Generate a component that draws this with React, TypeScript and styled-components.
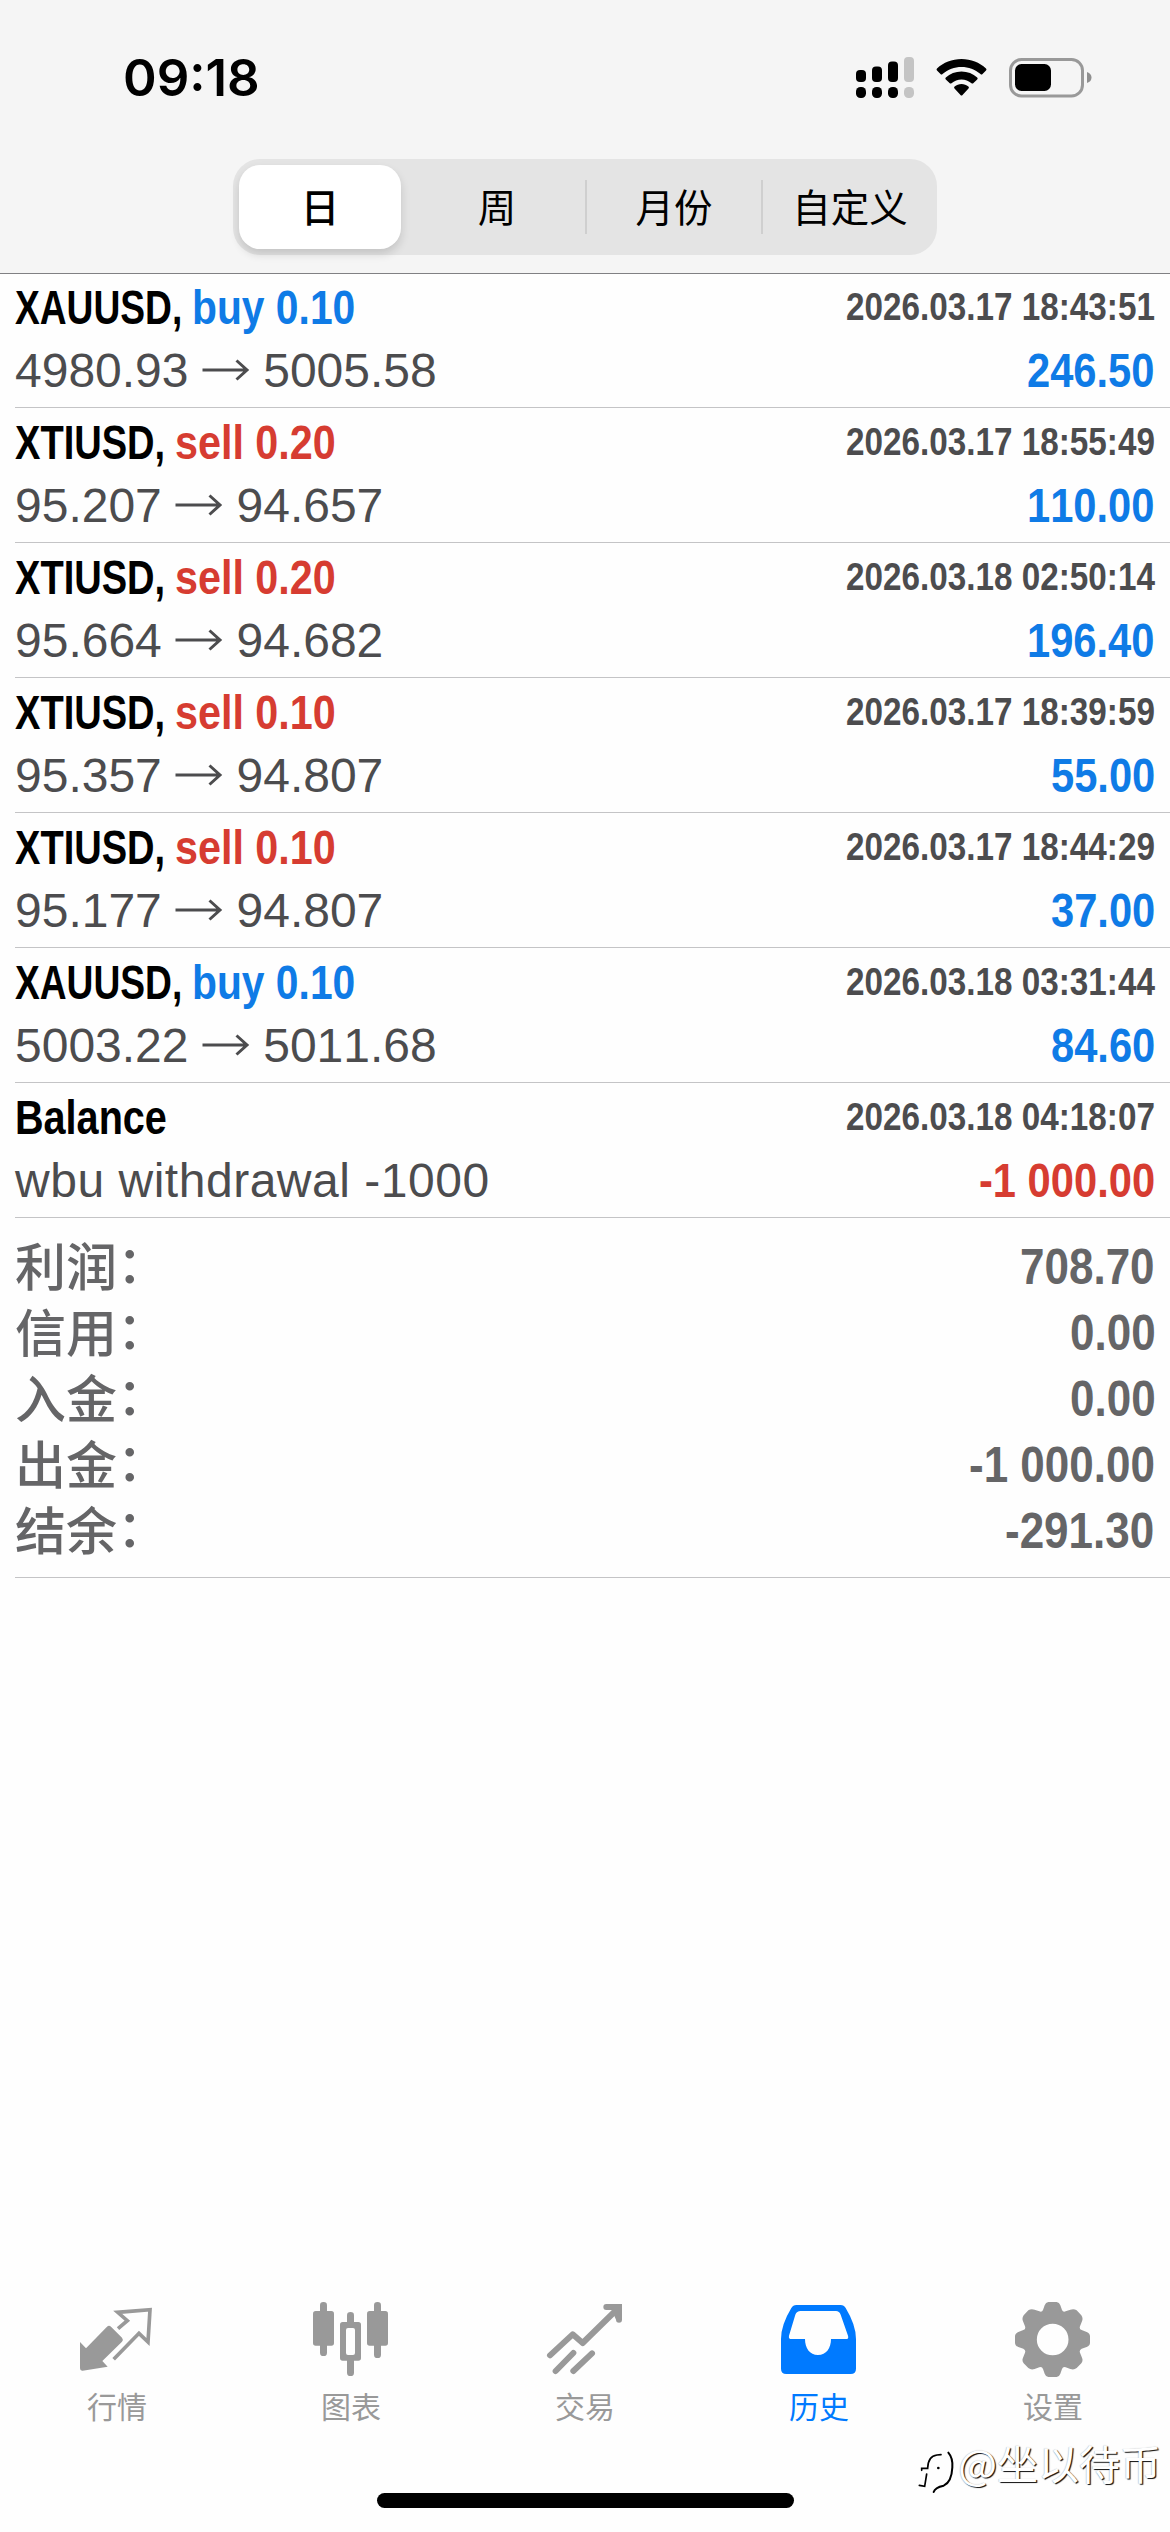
import React, { useLayoutEffect, useRef, useState } from 'react';
import styled, { createGlobalStyle } from 'styled-components';

const CJK = '"Noto Sans CJK SC", "Noto Sans", sans-serif';
const LATIN = '"Liberation Sans", Arial, "Noto Sans CJK SC", sans-serif';
const BLUE = '#0f7be6';
const RED = '#d63c31';

const GlobalStyle = createGlobalStyle`
  * { box-sizing: border-box; }
  body { margin: 0; background: #fefefe; }
`;

const Screen = styled.div`
  position: relative;
  display: flex;
  flex-direction: column;
  width: 1170px;
  height: 2532px;
  overflow: hidden;
  background: #fefefe;
  font-family: ${LATIN};
  font-kerning: none;
`;

const Header = styled.header`
  display: flex;
  flex-direction: column;
  align-items: center;
  height: 274px;
  flex: none;
  background: #f5f5f5;
  border-bottom: 1px solid #808083;
`;

const StatusBar = styled.div`
  display: flex;
  justify-content: space-between;
  align-items: center;
  width: 100%;
  height: 159px;
  padding: 0 78px 3px 123px;
`;

const Clock = styled.div`
  font: 600 51px/60px Inter, "Liberation Sans", sans-serif;
  color: #000;
`;

const StatusIcons = styled.svg`
  width: 236px;
  height: 44px;
`;

const Segments = styled.div`
  display: grid;
  grid-template-columns: repeat(4, 1fr);
  align-items: center;
  width: 704px;
  height: 96px;
  border-radius: 27px;
  background: #e4e4e4;
`;

const Segment = styled.button<{ $active?: boolean; $divided?: boolean }>`
  display: flex;
  align-items: center;
  justify-content: center;
  height: ${p => (p.$active ? '84px' : '54px')};
  margin: ${p => (p.$active ? '0 8px 0 6px' : '0')};
  padding: 0 0 4px;
  border: 0;
  border-left: ${p => (p.$divided ? '2px solid #cfcfcf' : '0')};
  border-radius: ${p => (p.$active ? '21px' : '0')};
  background: ${p => (p.$active ? '#fff' : 'transparent')};
  box-shadow: ${p => (p.$active ? '0 5px 10px rgba(0, 0, 0, 0.14)' : 'none')};
  font: ${p => (p.$active ? 500 : 400)} 38.5px/50px ${CJK};
  color: #000;
`;

const DealList = styled.main`
  display: flex;
  flex-direction: column;
  margin: -1px 0 0 15px;
`;

const Deal = styled.article`
  height: 135px;
  padding: 3px 15px 0 0;
  border-bottom: 1px solid #c4c4c6;
`;

const Line = styled.div`
  display: flex;
  justify-content: space-between;
  align-items: flex-start;
  height: 63px;
  white-space: pre;
`;

const Title = styled.div`
  display: flex;
  gap: 10px;
`;

const Heavy = styled.span<{ $color: string; $size?: number; $lh?: number }>`
  font-weight: 700;
  font-size: ${p => p.$size ?? 48}px;
  line-height: ${p => p.$lh ?? 63}px;
  color: ${p => p.$color};
`;

const Price = styled.div<{ $spacing?: number }>`
  font-size: 48px;
  line-height: 63px;
  letter-spacing: ${p => p.$spacing ?? 0}px;
  color: #4c4c4e;
`;

const Arrow = styled.svg`
  width: 48px;
  height: 24px;
  vertical-align: 5px;
`;

const Summary = styled.section`
  height: 360px;
  padding: 16px 15px 0 0;
  border-bottom: 1px solid #c4c4c6;
`;

const SummaryLine = styled.div`
  display: flex;
  justify-content: space-between;
  align-items: flex-start;
  height: 66px;
`;

const SummaryLabel = styled.span`
  font: 500 51px/69px ${LATIN};
  color: #656567;
`;

const Colon = styled.span`
  line-height: 0;
  vertical-align: 3px;
`;

const TabBar = styled.nav`
  display: grid;
  grid-template-columns: repeat(5, 1fr);
  margin-top: auto;
  height: 193px;
  flex: none;
`;

const Tab = styled.a<{ $active?: boolean }>`
  display: flex;
  flex-direction: column;
  align-items: center;
  gap: 7px;
  color: ${p => (p.$active ? '#007aff' : '#999')};
`;

const TabIcon = styled.svg`
  width: 78px;
  height: 78px;
`;

const TabLabel = styled.span`
  font: 400 30px/40px ${CJK};
`;

const HomeArea = styled.div`
  display: flex;
  justify-content: center;
  height: 39px;
  flex: none;
`;

const HomeIndicator = styled.div`
  width: 417px;
  height: 15px;
  border-radius: 8px;
  background: #000;
`;

const Watermark = styled.div`
  position: absolute;
  right: 9px;
  bottom: 38px;
  display: flex;
  align-items: center;
  gap: 2px;
  font: 400 41px/54px ${CJK};
  color: #fff;
  text-shadow: 1.3px 1.3px 0.8px #111, -0.5px -0.5px 1px rgba(0, 0, 0, 0.25);
  white-space: nowrap;
`;

const WatermarkLogo = styled.svg`
  width: 39px;
  height: 44px;
  margin-top: 20px;
`;

const CondensedBox = styled.span`
  display: block;
  white-space: pre;
`;

const CondensedInner = styled.span<{ $scale: number }>`
  display: block;
  width: max-content;
  transform: scaleX(${p => p.$scale});
  transform-origin: 0 50%;
`;

/* Narrows its text horizontally and takes up only the narrowed width. */
function Condensed({ scale, children }: { scale: number; children: React.ReactNode }) {
  const ref = useRef<HTMLSpanElement>(null);
  const [width, setWidth] = useState<number>();
  useLayoutEffect(() => {
    if (ref.current) setWidth(ref.current.offsetWidth * scale);
  }, [scale, children]);
  return (
    <CondensedBox style={{ width }}>
      <CondensedInner ref={ref} $scale={scale}>{children}</CondensedInner>
    </CondensedBox>
  );
}

type DealData = {
  symbol: string;
  side?: 'buy' | 'sell';
  volume?: string;
  from?: string;
  to?: string;
  comment?: string;
  time: string;
  profit: string;
};

const deals: DealData[] = [
  { symbol: 'XAUUSD', side: 'buy', volume: '0.10', from: '4980.93', to: '5005.58', time: '2026.03.17 18:43:51', profit: '246.50' },
  { symbol: 'XTIUSD', side: 'sell', volume: '0.20', from: '95.207', to: '94.657', time: '2026.03.17 18:55:49', profit: '110.00' },
  { symbol: 'XTIUSD', side: 'sell', volume: '0.20', from: '95.664', to: '94.682', time: '2026.03.18 02:50:14', profit: '196.40' },
  { symbol: 'XTIUSD', side: 'sell', volume: '0.10', from: '95.357', to: '94.807', time: '2026.03.17 18:39:59', profit: '55.00' },
  { symbol: 'XTIUSD', side: 'sell', volume: '0.10', from: '95.177', to: '94.807', time: '2026.03.17 18:44:29', profit: '37.00' },
  { symbol: 'XAUUSD', side: 'buy', volume: '0.10', from: '5003.22', to: '5011.68', time: '2026.03.18 03:31:44', profit: '84.60' },
  { symbol: 'Balance', comment: 'wbu withdrawal -1000', time: '2026.03.18 04:18:07', profit: '-1 000.00' },
];

const symbolScale: Record<string, number> = { XAUUSD: 0.774, XTIUSD: 0.793, Balance: 0.825 };

const totals = [
  ['利润', '708.70'],
  ['信用', '0.00'],
  ['入金', '0.00'],
  ['出金', '-1 000.00'],
  ['结余', '-291.30'],
];

function DealRow({ deal }: { deal: DealData }) {
  return (
    <Deal>
      <Line>
        <Title>
          <Heavy $color="#000">
            <Condensed scale={symbolScale[deal.symbol]}>{deal.symbol + (deal.side ? ',' : '')}</Condensed>
          </Heavy>
          {deal.side && (
            <Heavy $color={deal.side === 'buy' ? BLUE : RED}>
              <Condensed scale={deal.side === 'buy' ? 0.85 : 0.86}>{`${deal.side} ${deal.volume}`}</Condensed>
            </Heavy>
          )}
        </Title>
        <Heavy $color="#4c4c4e" $size={39} $lh={61}>
          <Condensed scale={0.853}>{deal.time}</Condensed>
        </Heavy>
      </Line>
      <Line>
        {deal.comment ? (
          <Price $spacing={0.52}>{deal.comment}</Price>
        ) : (
          <Price>
            {deal.from}{' '}
            <Arrow viewBox="0 0 48 24" fill="none" stroke="currentColor" strokeWidth="3">
              <path d="M0.5 12H45M34.5 2.500L45 12L34.5 21.500" />
            </Arrow>{' '}
            {deal.to}
          </Price>
        )}
        <Heavy $color={deal.profit.startsWith('-') ? RED : BLUE}>
          <Condensed scale={0.868}>{deal.profit}</Condensed>
        </Heavy>
      </Line>
    </Deal>
  );
}

function QuotesIcon() {
  return (
    <TabIcon viewBox="84 90 234 234">
      <path fill="currentColor" d="M90 216L108 235L171 170Q177 164 183 170L216 203Q221 209 216 215L157 273L173 290L98 302Q90 303 90 295Z" />
      <path fill="none" stroke="currentColor" strokeWidth="11" d="M204 176L232 152L203 127L300 119L294 216L267 190L191 268" />
    </TabIcon>
  );
}

function ChartsIcon() {
  return (
    <TabIcon viewBox="786 90 234 234">
      <g fill="currentColor">
        <rect x="810" y="96" width="21" height="162" rx="10" />
        <rect x="789" y="123" width="63" height="104" rx="8" />
        <rect x="972" y="96" width="21" height="168" rx="10" />
        <rect x="951" y="123" width="63" height="104" rx="8" />
        <path d="M891 160V136Q891 126 901.500 126T912 136V160Z" />
        <path d="M891 268V308Q891 318 901.500 318T912 308V268Z" />
        <path fillRule="evenodd" d="M878 156H925Q933 156 933 164V264Q933 272 925 272H878Q870 272 870 264V164Q870 156 878 156ZM894 174Q888 174 888 180V249Q888 255 894 255H909Q915 255 915 249V180Q915 174 909 174Z" />
      </g>
    </TabIcon>
  );
}

function TradeIcon() {
  return (
    <TabIcon viewBox="138 90 234 234">
      <g fill="none" stroke="currentColor" strokeWidth="18" strokeLinecap="round" strokeLinejoin="round">
        <path d="M150 256L218 193L248 219L352 117" />
        <path d="M319 111H350" />
        <path d="M357 120V149" />
        <path d="M167 303L220 249M220 303L276 250" />
      </g>
      <path fill="currentColor" d="M318 102H366V149H348L335 119Z" />
    </TabIcon>
  );
}

function HistoryIcon() {
  return (
    <TabIcon viewBox="840 90 234 234">
      <path
        fill="currentColor"
        fillRule="evenodd"
        d="M889 105H1022Q1032 105 1037 114Q1068 165 1068 207V296Q1068 312 1052 312H859Q843 312 843 296V207Q843 165 874 114Q879 105 889 105ZM902 123Q890 123 886 134L867 197Q865 207 874 207H915C915 234 929 255 954 255S993 234 993 207H1038Q1047 207 1044 197L1022 134Q1018 123 1008 123Z"
      />
    </TabIcon>
  );
}

function SettingsIcon() {
  return (
    <TabIcon viewBox="342 90 234 234">
      <path
        fill="currentColor"
        fillRule="evenodd"
        d="M445 96H470Q478 97 481 106L486 120Q489 127 497 124L511 119Q522 115 530 121L544 136Q550 144 546 154L540 169Q537 177 545 180L560 186Q570 190 570 199V218Q570 227 560 231L545 236Q537 240 540 248L546 263Q550 272 544 280L530 294Q522 301 511 297L497 292Q489 289 486 297L481 311Q478 320 470 321H445Q437 320 434 311L429 297Q426 289 418 292L404 297Q393 301 385 294L371 280Q365 272 369 263L375 248Q378 240 370 236L355 231Q345 227 345 218V199Q345 190 355 186L370 180Q378 177 375 169L369 154Q365 144 371 136L385 121Q393 115 404 119L418 124Q426 127 429 120L434 106Q437 97 445 96ZM458 161A47.500 47.500 0 1 0 458 256A47.500 47.500 0 1 0 458 161Z"
      />
    </TabIcon>
  );
}

const tabs = [
  { label: '行情', Icon: QuotesIcon },
  { label: '图表', Icon: ChartsIcon },
  { label: '交易', Icon: TradeIcon },
  { label: '历史', Icon: HistoryIcon, active: true },
  { label: '设置', Icon: SettingsIcon },
];

export default function App() {
  return (
    <Screen>
      <GlobalStyle />
      <Header>
        <StatusBar>
          <Clock>09:18</Clock>
          <StatusIcons viewBox="856 56 236 44">
            <rect x="856" y="70" width="10" height="12" rx="4" />
            <rect x="872" y="66.500" width="10" height="15.500" rx="4" />
            <rect x="888" y="61.500" width="10" height="20.500" rx="4" />
            <rect x="904" y="57" width="10" height="25" rx="4" fill="#c4c4c4" />
            <rect x="856" y="87" width="10" height="11" rx="4.500" />
            <rect x="872" y="87" width="10" height="11" rx="4.500" />
            <rect x="888" y="87" width="10" height="11" rx="4.500" />
            <rect x="904" y="87" width="10" height="11" rx="4.500" fill="#c4c4c4" />
            <path d="M961.500 59C971 59 979.500 62.500 986 68.500Q987 69.500 986 70.500L982.500 74Q981.500 75 980.500 74C975 69.500 968.500 67 961.500 67S948 69.500 942.500 74Q941.500 75 940.500 74L937 70.500Q936 69.500 937 68.500C943.500 62.500 952 59 961.500 59Z" />
            <path d="M961.500 71.500C967.500 71.500 973 73.700 977.200 77.500Q978.200 78.500 977.200 79.500L973.500 83Q972.500 84 971.500 83.200C968.700 80.900 965.200 79.500 961.500 79.500S954.300 80.900 951.500 83.200Q950.500 84 949.500 83L945.800 79.500Q944.800 78.500 945.800 77.500C950 73.700 955.500 71.500 961.500 71.500Z" />
            <path d="M961.500 84C964 84 966.500 85 968.400 86.500Q969.500 87.500 968.500 88.500L962.500 95Q961.500 96 960.500 95L954.500 88.500Q953.500 87.500 954.600 86.500C956.500 85 959 84 961.500 84Z" />
            <rect x="1010.500" y="59.500" width="72" height="36.500" rx="11" fill="none" stroke="#999" strokeWidth="3" />
            <rect x="1015" y="64" width="36" height="27" rx="6.500" />
            <path fill="#8f8f8f" d="M1087 72Q1091.500 73.500 1091.500 77.500T1087 83Z" />
          </StatusIcons>
        </StatusBar>
        <Segments>
          <Segment $active>日</Segment>
          <Segment>周</Segment>
          <Segment $divided>月份</Segment>
          <Segment $divided>自定义</Segment>
        </Segments>
      </Header>
      <DealList>
        {deals.map(deal => (
          <DealRow key={deal.time} deal={deal} />
        ))}
        <Summary>
          {totals.map(([label, value]) => (
            <SummaryLine key={label}>
              <SummaryLabel>
                {label}
                <Colon>：</Colon>
              </SummaryLabel>
              <Heavy $color="#656567" $size={50} $lh={67}>
                <Condensed scale={0.88}>{value}</Condensed>
              </Heavy>
            </SummaryLine>
          ))}
        </Summary>
      </DealList>
      <TabBar>
        {tabs.map(({ label, Icon, active }) => (
          <Tab key={label} $active={active}>
            <Icon />
            <TabLabel>{label}</TabLabel>
          </Tab>
        ))}
      </TabBar>
      <HomeArea>
        <HomeIndicator />
      </HomeArea>
      <Watermark>
        <WatermarkLogo viewBox="18 60 117 132" fill="none" stroke="#000" strokeLinecap="round">
          <path strokeWidth="5" d="M32 121V115H50Q51 78 78 75L90 74M47 132L41 169L25 166" />
          <path strokeWidth="6" d="M112 68Q126 84 124 112Q122 156 98 167Q72 172 68 186" />
          <circle cx="82" cy="114" r="4" fill="#000" stroke="none" />
        </WatermarkLogo>
        @坐以待币
      </Watermark>
    </Screen>
  );
}
